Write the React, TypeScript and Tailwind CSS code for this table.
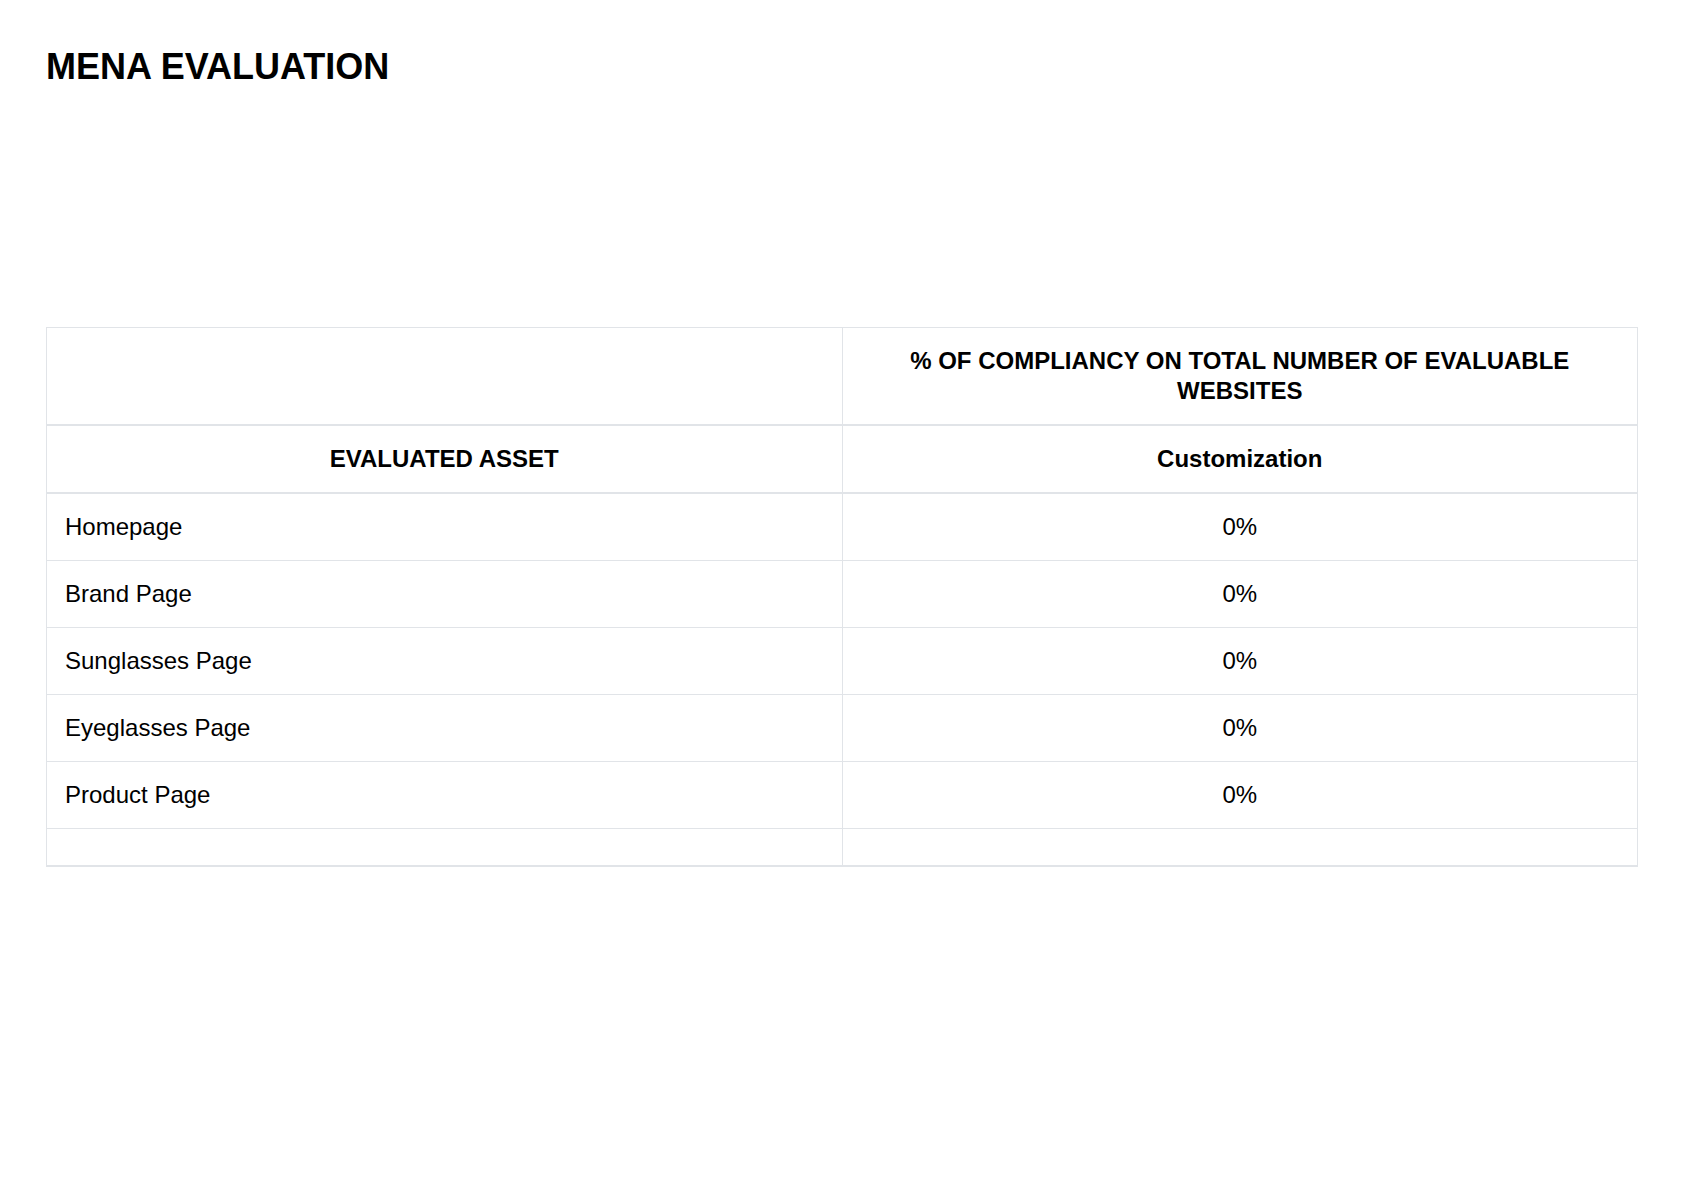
const rows = [
  { asset: "Homepage", value: "0%" },
  { asset: "Brand Page", value: "0%" },
  { asset: "Sunglasses Page", value: "0%" },
  { asset: "Eyeglasses Page", value: "0%" },
  { asset: "Product Page", value: "0%" },
];

export default function App() {
  return (
    <div className="min-h-screen bg-white px-[46px] pt-[46px] font-['Liberation_Sans',Arial,sans-serif] text-black">
      <h1 className="text-[36px] font-bold leading-[41px]">MENA EVALUATION</h1>

      <table className="mt-[240px] w-full table-fixed border-collapse border border-[#e1e4e8] text-[24px] leading-[30px]">
        <thead>
          <tr className="border-b-2 border-[#e1e4e8]">
            <th className="border-r border-[#e1e4e8] px-[18px] py-[18px]" />
            <th className="px-[18px] py-[18px] text-center font-bold">
              % OF COMPLIANCY ON TOTAL NUMBER OF EVALUABLE WEBSITES
            </th>
          </tr>
          <tr className="border-b-2 border-[#e1e4e8]">
            <th className="border-r border-[#e1e4e8] px-[18px] py-[18px] text-center font-bold">
              EVALUATED ASSET
            </th>
            <th className="px-[18px] py-[18px] text-center font-bold">Customization</th>
          </tr>
        </thead>
        <tbody>
          {rows.map((r) => (
            <tr key={r.asset} className="border-b border-[#e1e4e8]">
              <td className="border-r border-[#e1e4e8] px-[18px] py-[18px] text-left">
                {r.asset}
              </td>
              <td className="px-[18px] py-[18px] text-center">{r.value}</td>
            </tr>
          ))}
          <tr className="border-b-2 border-[#e1e4e8]">
            <td className="border-r border-[#e1e4e8] px-[18px] py-[18px]" />
            <td className="px-[18px] py-[18px]" />
          </tr>
        </tbody>
      </table>
    </div>
  );
}
